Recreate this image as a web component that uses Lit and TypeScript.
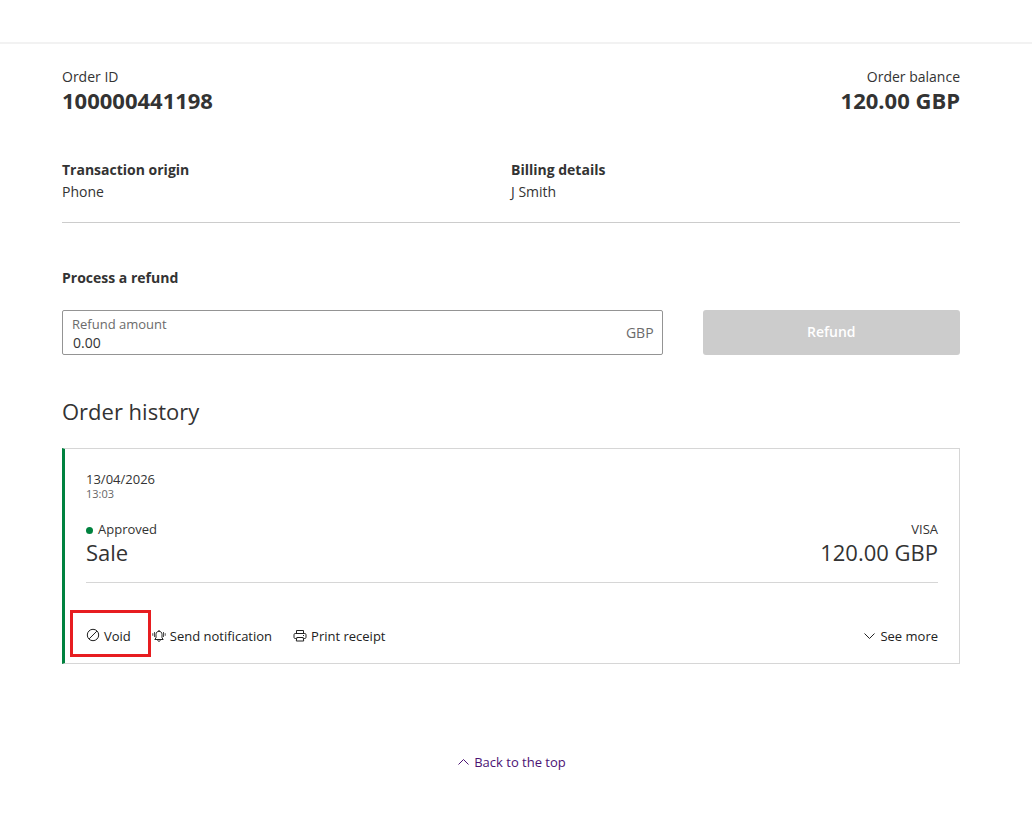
import { LitElement, html, css, svg } from "lit";
import { customElement, state } from "lit/decorators.js";

const voidIcon = svg`<circle cx="7" cy="7" r="5.7"/><path d="M3.1 10.9 10.9 3.1"/>`;
const bellIcon = svg`<path d="M2.800 11.500h8.400L10 9.800V6.500C10 4.500 8.800 3.300 7 3.300S4 4.500 4 6.500v3.300z"/><path d="M7 3.300V2M5.700 11.700c.1 1.200.6 1.700 1.300 1.700s1.200-.5 1.300-1.700"/><path stroke-width=".8" d="M2.500 4v5M11.500 4v5M.8 5.200v2.600M13.200 5.200v2.600"/>`;
const printIcon = svg`<path d="M3.500 5.500v-3h7v3M3.300 10.500H2.200c-.7 0-1.200-.4-1.200-1.100V6.700c0-.8.500-1.200 1.200-1.200h9.600c.7 0 1.200.4 1.200 1.200v2.700c0 .7-.5 1.100-1.200 1.100h-1.100M3.800 9.500h6.400l.5 3.500H3.300zM10 7.500h1"/>`;
const downIcon = svg`<path d="M2.500 5.500 7.500 10.500 12.500 5.500"/>`;
const upIcon = svg`<path d="M2.500 10.500 7.500 5.500 12.500 10.500"/>`;

@customElement("app-root")
export class AppRoot extends LitElement {
  @state() private amount = "0.00";

  static styles = css`
    :host {
      display: block;
      background: #fff;
      color: #333;
      font: 14px/22px "Open Sans", sans-serif;
    }
    * { box-sizing: border-box; }
    h1, h2, h3, p, dl, dd { margin: 0; font: inherit; }
    .topbar { height: 44px; border-bottom: 2px solid #f2f2f2; }
    .page { padding: 22px 72px 44px 62px; }
    .row { display: flex; justify-content: space-between; }
    .end { text-align: right; }
    .row .total { font-size: 22px; line-height: 24px; font-weight: 700; }
    .details {
      display: grid;
      grid-template-columns: 1fr 1fr;
      margin-top: 47px;
      padding-bottom: 19px;
      border-bottom: 1px solid #ccc;
    }
    .details dt, .subhead { font-weight: 700; }
    .subhead { margin-top: 44px; }
    .refund {
      display: grid;
      grid-template-columns: minmax(0, 7fr) minmax(0, 3fr);
      gap: 40px;
      margin-top: 21px;
    }
    .field {
      display: flex;
      align-items: center;
      height: 45px;
      padding: 0 8px 0 9px;
      border: 1px solid #949494;
      border-radius: 2px;
      color: #6b6b6b;
    }
    .entry { flex: 1; min-width: 0; display: flex; flex-direction: column; padding-top: 2px; }
    .entry label { font-size: 13px; line-height: 18px; }
    .entry input {
      width: 100%;
      padding: 0 1px;
      border: 0;
      outline: 0;
      background: none;
      color: #333;
      font: inherit;
      line-height: 20px;
    }
    .submit {
      padding: 0 0 2px;
      border: 0;
      border-radius: 3px;
      background: #ccc;
      color: #fff;
      font: inherit;
      font-weight: 600;
    }
    .title { margin-top: 42px; font-size: 22px; line-height: 28px; }
    .card {
      margin-top: 23px;
      padding: 21px 21px 18px;
      border: 1px solid #d6d6d6;
      border-left: 3px solid #00823f;
      font-size: 13px;
      line-height: 18px;
    }
    .time { color: #666; font-size: 11px; line-height: 12px; }
    .sale { margin-top: 20px; padding-bottom: 16px; border-bottom: 1px solid #d6d6d6; }
    .status { display: flex; align-items: center; gap: 5px; }
    .dot { width: 7px; height: 7px; margin-top: 2px; border-radius: 50%; background: #00823f; }
    .large { font-size: 22px; line-height: 28px; }
    .actions { display: flex; align-items: center; gap: 21px; margin-top: 44px; }
    .action {
      display: inline-flex;
      align-items: center;
      gap: 4px;
      padding: 0;
      border: 0;
      background: none;
      color: inherit;
      font: inherit;
      text-decoration: none;
      cursor: pointer;
    }
    .actions .action { color: #222; }
    .actions .more { margin-left: auto; }
    .marked { position: relative; }
    .marked::after {
      content: "";
      position: absolute;
      inset: -17px -20px -12px -16px;
      border: 3px solid #e71d20;
      pointer-events: none;
    }
    svg {
      width: 14px;
      height: 14px;
      margin-bottom: 2px;
      fill: none;
      stroke: currentColor;
      stroke-width: 1;
    }
    .back { display: flex; justify-content: center; margin-top: 89px; color: #4b1273; font-size: 13px; line-height: 18px; }
  `;

  private icon(shape: unknown) {
    return html`<svg viewBox="0 0 14 14" aria-hidden="true">${shape}</svg>`;
  }

  render() {
    return html`
      <header class="topbar" id="top"></header>
      <main class="page">
        <div class="row">
          <div><p>Order ID</p><h1 class="total">100000441198</h1></div>
          <div class="end"><p>Order balance</p><p class="total">120.00 GBP</p></div>
        </div>
        <dl class="details">
          <div><dt>Transaction origin</dt><dd>Phone</dd></div>
          <div><dt>Billing details</dt><dd>J Smith</dd></div>
        </dl>
        <h3 class="subhead">Process a refund</h3>
        <form class="refund" @submit=${(e: Event) => e.preventDefault()}>
          <div class="field">
            <div class="entry">
              <label for="amount">Refund amount</label>
              <input id="amount" inputmode="decimal" .value=${this.amount}
                @input=${(e: Event) => (this.amount = (e.target as HTMLInputElement).value)} />
            </div>
            <span>GBP</span>
          </div>
          <button class="submit" ?disabled=${!(Number(this.amount) > 0)}>Refund</button>
        </form>
        <h2 class="title">Order history</h2>
        <article class="card">
          <p>13/04/2026</p>
          <p class="time">13:03</p>
          <div class="row sale">
            <div>
              <p class="status"><span class="dot"></span>Approved</p>
              <p class="large">Sale</p>
            </div>
            <div class="end"><p>VISA</p><p class="large">120.00 GBP</p></div>
          </div>
          <div class="actions">
            <button class="action marked">${this.icon(voidIcon)}Void</button>
            <button class="action">${this.icon(bellIcon)}Send notification</button>
            <button class="action">${this.icon(printIcon)}Print receipt</button>
            <button class="action more">${this.icon(downIcon)}See more</button>
          </div>
        </article>
        <nav class="back"><a class="action" href="#top">${this.icon(upIcon)}Back to the top</a></nav>
      </main>
    `;
  }
}
